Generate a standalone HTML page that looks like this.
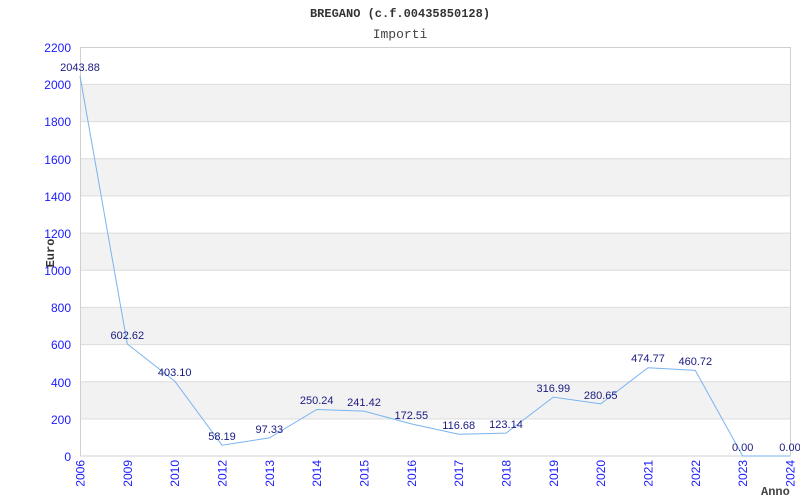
<!DOCTYPE html><html><head><style>body{margin:0;background:#fff}svg{display:block}</style></head><body>
<svg width="800" height="500" xmlns="http://www.w3.org/2000/svg" font-family="Liberation Sans, Arial, sans-serif">
<rect width="800" height="500" fill="#fff"/>
<g fill="#f2f2f2">
<rect x="80.5" y="84.4" width="710" height="37.2"/>
<rect x="80.5" y="158.7" width="710" height="37.2"/>
<rect x="80.5" y="233.1" width="710" height="37.2"/>
<rect x="80.5" y="307.4" width="710" height="37.2"/>
<rect x="80.5" y="381.8" width="710" height="37.2"/>
</g>
<g stroke="#dcdcdc" stroke-width="1">
<line x1="80.5" x2="790.5" y1="84.4" y2="84.4"/><line x1="80.5" x2="790.5" y1="121.6" y2="121.6"/>
<line x1="80.5" x2="790.5" y1="158.7" y2="158.7"/><line x1="80.5" x2="790.5" y1="195.9" y2="195.9"/>
<line x1="80.5" x2="790.5" y1="233.1" y2="233.1"/><line x1="80.5" x2="790.5" y1="270.3" y2="270.3"/>
<line x1="80.5" x2="790.5" y1="307.4" y2="307.4"/><line x1="80.5" x2="790.5" y1="344.6" y2="344.6"/>
<line x1="80.5" x2="790.5" y1="381.8" y2="381.8"/><line x1="80.5" x2="790.5" y1="419" y2="419"/>
<rect x="80.5" y="47.5" width="710" height="408.5" fill="none" stroke="#d0d0d0"/>
</g>
<polyline fill="none" stroke="#7ab4f0" stroke-width="1" points="80,76 127.3,344 174.7,381.1 222,445.2 269.3,437.9 316.7,409.5 364,411.1 411.3,423.9 458.7,434.3 506,433.1 553.3,397.1 600.7,403.9 648,367.7 695.3,370.4 742.7,456 790,456"/>
<g font-size="11" fill="#1a1a80" text-anchor="middle">
<text x="80" y="71">2043.88</text><text x="127.3" y="339">602.62</text><text x="174.7" y="376">403.10</text>
<text x="222" y="440">58.19</text><text x="269.3" y="433">97.33</text><text x="316.7" y="404">250.24</text>
<text x="364" y="406">241.42</text><text x="411.3" y="419">172.55</text><text x="458.7" y="429">116.68</text>
<text x="506" y="428">123.14</text><text x="553.3" y="392">316.99</text><text x="600.7" y="399">280.65</text>
<text x="648" y="362">474.77</text><text x="695.3" y="365">460.72</text><text x="742.7" y="451">0.00</text><text x="790" y="451">0.00</text>
</g>
<g font-size="12" fill="#1a1aff" text-anchor="end">
<text x="71" y="52">2200</text><text x="71" y="89">2000</text><text x="71" y="126">1800</text><text x="71" y="164">1600</text>
<text x="71" y="201">1400</text><text x="71" y="238">1200</text><text x="71" y="275">1000</text><text x="71" y="312">800</text>
<text x="71" y="349">600</text><text x="71" y="387">400</text><text x="71" y="424">200</text><text x="71" y="461">0</text>
</g>
<g font-size="12" fill="#1a1aff" text-anchor="end">
<text transform="translate(84.5,460) rotate(-90)">2006</text><text transform="translate(131.8,460) rotate(-90)">2009</text>
<text transform="translate(179.2,460) rotate(-90)">2010</text><text transform="translate(226.5,460) rotate(-90)">2012</text>
<text transform="translate(273.8,460) rotate(-90)">2013</text><text transform="translate(321.2,460) rotate(-90)">2014</text>
<text transform="translate(368.5,460) rotate(-90)">2015</text><text transform="translate(415.8,460) rotate(-90)">2016</text>
<text transform="translate(463.2,460) rotate(-90)">2017</text><text transform="translate(510.5,460) rotate(-90)">2018</text>
<text transform="translate(557.8,460) rotate(-90)">2019</text><text transform="translate(605.2,460) rotate(-90)">2020</text>
<text transform="translate(652.5,460) rotate(-90)">2021</text><text transform="translate(699.8,460) rotate(-90)">2022</text>
<text transform="translate(747.2,460) rotate(-90)">2023</text><text transform="translate(794.5,460) rotate(-90)">2024</text>
</g>
<g font-family="Liberation Mono, DejaVu Sans Mono, monospace" fill="#333">
<text x="400" y="17" font-size="12" font-weight="bold" text-anchor="middle">BREGANO (c.f.00435850128)</text>
<text x="400" y="38" font-size="13" text-anchor="middle" fill="#444">Importi</text>
<text transform="translate(54,253) rotate(-90)" font-size="12" font-weight="bold" text-anchor="middle">Euro</text>
<text x="761" y="495" font-size="12" font-weight="bold" fill="#444">Anno</text>
</g>
</svg>
</body></html>
